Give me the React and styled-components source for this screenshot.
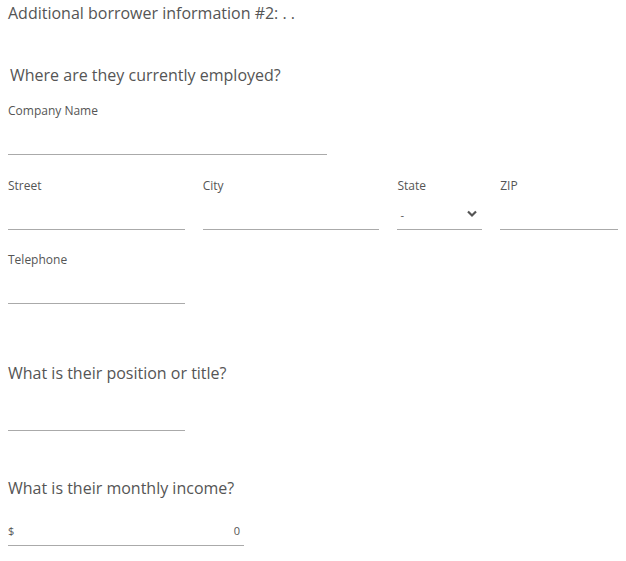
import React from "react";
import styled, { createGlobalStyle } from "styled-components";

const Global = createGlobalStyle`
  body {
    margin: 0;
    background: #fff;
    font-family: "Open Sans", "Liberation Sans", sans-serif;
    color: #555;
  }
`;

const Page = styled.div`
  padding: 0 8px;
  width: 626px;
  box-sizing: border-box;
`;

const Title = styled.div`
  font-size: 16px;
  line-height: 22px;
  padding-top: 2px;
  color: #555;
`;

const Question = styled.div`
  font-size: 16px;
  line-height: 22px;
  margin-top: ${(p) => p.$top || 0}px;
  padding-left: ${(p) => p.$indent || 0}px;
  color: #555;
`;

const Row = styled.div`
  display: flex;
  gap: 18px;
  margin-top: ${(p) => p.$top || 0}px;
`;

const Field = styled.div`
  width: ${(p) => p.$w}px;
  display: flex;
  flex-direction: column;
`;

const Label = styled.div`
  font-size: 12px;
  line-height: 16px;
  height: 16px;
  color: #555;
`;

const Line = styled.div`
  height: 30px;
  margin-top: ${(p) => (p.$bare ? 0 : 5)}px;
  border-bottom: 1px solid #aaa;
  display: flex;
  align-items: center;
  justify-content: space-between;
  font-size: 11px;
  color: #555;
`;

const Chevron = styled.svg`
  width: 10px;
  height: 8px;
  margin-right: 5px;
`;

const Dash = styled.span`
  padding-left: 3px;
  font-size: 11px;
`;

const Amount = styled.span`
  padding-right: 4px;
`;

export default function App() {
  return (
    <Page>
      <Global />
      <Title>Additional borrower information #2: . .</Title>
      <Question $top={40} $indent={2}>Where are they currently employed?</Question>
      <Row $top={17}>
        <Field $w={319}>
          <Label>Company Name</Label>
          <Line />
        </Field>
      </Row>
      <Row $top={23}>
        <Field $w={177}>
          <Label>Street</Label>
          <Line />
        </Field>
        <Field $w={177}>
          <Label>City</Label>
          <Line />
        </Field>
        <Field $w={85}>
          <Label>State</Label>
          <Line>
            <Dash>-</Dash>
            <Chevron viewBox="0 0 10 8">
              <path d="M1 1.5 L5 5.5 L9 1.5" fill="none" stroke="#555" strokeWidth="2.2" />
            </Chevron>
          </Line>
        </Field>
        <Field $w={118}>
          <Label>ZIP</Label>
          <Line />
        </Field>
      </Row>
      <Row $top={22}>
        <Field $w={177}>
          <Label>Telephone</Label>
          <Line />
        </Field>
      </Row>
      <Question $top={58}>What is their position or title?</Question>
      <Row $top={16}>
        <Field $w={177}>
          <Line $bare />
        </Field>
      </Row>
      <Question $top={46}>What is their monthly income?</Question>
      <Row $top={16}>
        <Field $w={236}>
          <Line $bare>
            <span>$</span>
            <Amount>0</Amount>
          </Line>
        </Field>
      </Row>
    </Page>
  );
}
